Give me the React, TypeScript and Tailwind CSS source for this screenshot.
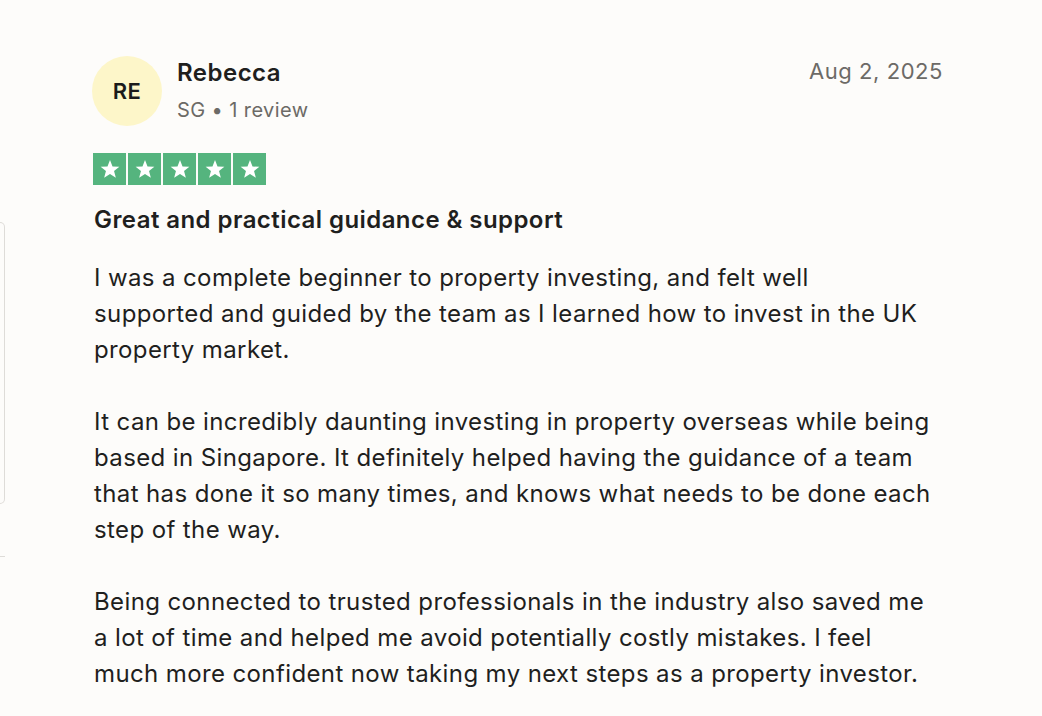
const paragraphs = [
  'I was a complete beginner to property investing, and felt well supported and guided by the team as I learned how to invest in the UK property market.',
  'It can be incredibly daunting investing in property overseas while being based in Singapore. It definitely helped having the guidance of a team that has done it so many times, and knows what needs to be done each step of the way.',
  'Being connected to trusted professionals in the industry also saved me a lot of time and helped me avoid potentially costly mistakes. I feel much more confident now taking my next steps as a property investor.',
];

function StarBox() {
  return (
    <div className="w-[33px] h-[32px] bg-[#55b47e] flex items-center justify-center">
      <svg viewBox="0 0 24 24" className="w-[22px] h-[22px]" fill="#ffffff">
        <path d="M12 2.2l2.75 7.05 7.45.35-5.8 4.7 1.98 7.3L12 17.45l-6.38 4.15 1.98-7.3-5.8-4.7 7.45-.35z" />
      </svg>
    </div>
  );
}

export default function App() {
  return (
    <div
      className="min-h-[716px] bg-[#fdfcfa] text-[#1f1f1e] flex"
      style={{ fontFamily: 'Inter, "Noto Sans", sans-serif' }}
    >
      {/* edge of the neighbouring card */}
      <div className="w-[5px] flex flex-col">
        <div className="mt-[222px] h-[282px] border border-l-0 border-[#dedcd8] rounded-r-[8px]" />
        <div className="mt-[52px] h-px bg-[#dedcd8]" />
      </div>

      <article className="ml-[87px] w-[850px] pt-[56px]">
        <header className="flex items-start justify-between">
          <div className="flex items-center gap-[15px]">
            <div className="w-[70px] h-[70px] rounded-full bg-[#fdf6c9] flex items-center justify-center text-[22px] font-semibold tracking-[0.02em] text-[#1b1b1b]">
              RE
            </div>
            <div className="flex flex-col -mt-[1px]">
              <span className="text-[24px] leading-[30px] font-semibold tracking-[0.02em] text-[#1f1f1e]">
                Rebecca
              </span>
              <span className="text-[20px] leading-[28px] tracking-[0.02em] text-[#6c6a66] mt-[8px]">
                SG • 1 review
              </span>
            </div>
          </div>
          <time className="text-[22px] leading-[30px] tracking-[0.025em] text-[#6c6a66] -mr-[1px]">
            Aug 2, 2025
          </time>
        </header>

        <div className="mt-[27px] flex gap-[2px] ml-[1px]">
          {[0, 1, 2, 3, 4].map((i) => (
            <StarBox key={i} />
          ))}
        </div>

        <h2 className="mt-[19px] ml-[2px] text-[24px] leading-[32px] font-semibold tracking-[0.018em]">
          Great and practical guidance &amp; support
        </h2>

        <div className="mt-[24px] ml-[2px] w-[838px] text-[24px] leading-[36px] tracking-[0.016em] flex flex-col gap-[36px]">
          {paragraphs.map((p, i) => (
            <p key={i}>{p}</p>
          ))}
        </div>
      </article>
    </div>
  );
}
